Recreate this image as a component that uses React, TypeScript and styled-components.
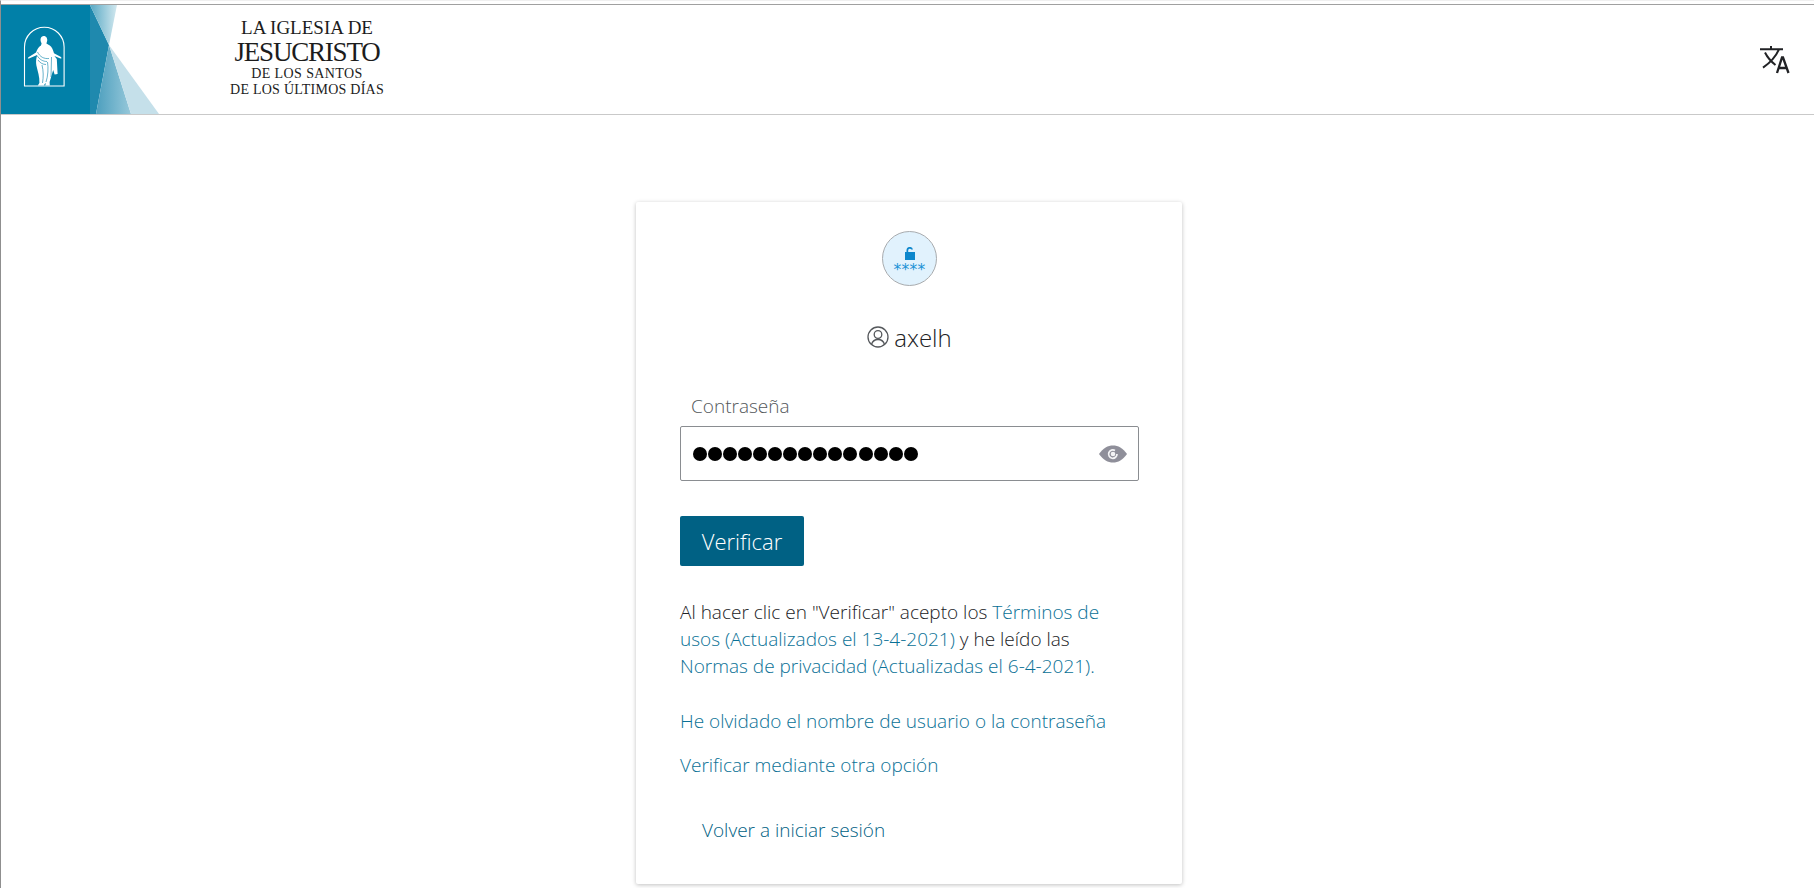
import styled, {createGlobalStyle} from 'styled-components';

const GlobalStyle = createGlobalStyle`
  html, body {
    margin: 0;
    height: 100%;
    overflow: hidden;
    background: #fff;
  }
  body {
    font-family: "Open Sans", "Noto Sans", sans-serif;
    color: #212225;
  }
`;

const Page = styled('div')`
  height: 888px;
  box-sizing: border-box;
  border-top: 1px solid #f0f0f0;
  border-left: 1px solid #8f8f8f;
  padding-top: 3px;
  overflow: hidden;
`;

const Header = styled('header')`
  display: flex;
  align-items: stretch;
  height: 111px;
  box-sizing: border-box;
  border-top: 1px solid #a0a0a0;
  border-bottom: 1px solid #c9c9c9;
`;

const Banner = styled('svg')`
  display: block;
  width: 160px;
  height: 109px;
  flex: none;
`;

const Wordmark = styled('div')`
  width: 152px;
  margin-left: 70px;
  padding-top: 13px;
  display: flex;
  flex-direction: column;
  align-items: center;
  font-family: "Liberation Serif", serif;
  color: #1c1c1c;
  text-transform: uppercase;
`;

const WordLine = styled('span')<{$size: number; $height: number; $track?: number}>`
  font-size: ${p => p.$size}px;
  line-height: ${p => p.$height}px;
  letter-spacing: ${p => p.$track ?? 0}px;
  white-space: nowrap;
`;

const LangButton = styled('button')`
  margin-left: auto;
  margin-right: 22px;
  margin-top: 38px;
  align-self: flex-start;
  width: 32px;
  height: 32px;
  padding: 0;
  border: 0;
  background: none;
  color: #212225;
`;

const Card = styled('main')`
  width: 546px;
  box-sizing: border-box;
  margin: 87px 0 0 635px;
  height: 682px;
  padding: 29px 43px 0 44px;
  border-radius: 2px;
  background: #fff;
  box-shadow: 0 1px 4px rgba(0, 0, 0, 0.25);
  display: flex;
  flex-direction: column;
`;

const Badge = styled('div')`
  align-self: center;
  width: 55px;
  height: 55px;
  box-sizing: border-box;
  padding-top: 15px;
  border: 1px solid #a8abae;
  border-radius: 50%;
  background: #e1f2fd;
  display: flex;
  flex-direction: column;
  align-items: center;
`;

const Stars = styled('span')`
  margin-top: 3px;
  font-family: "DejaVu Sans", sans-serif;
  font-size: 15.500px;
  line-height: 14px;
  letter-spacing: 0.3px;
  color: #1c93d6;
`;

const UserRow = styled('div')`
  display: flex;
  align-items: center;
  justify-content: center;
  gap: 5px;
  margin-top: 34px;
  height: 34px;
  font-size: 24px;
  font-weight: 300;
  color: #212225;
`;

const FieldLabel = styled('label')`
  display: block;
  margin: 40px 0 0 11px;
  font-size: 19px;
  line-height: 24px;
  font-weight: 300;
  color: #53575b;
`;

const PasswordBox = styled('div')`
  margin-top: 8px;
  height: 55px;
  box-sizing: border-box;
  border: 1px solid #8a8d91;
  border-radius: 2px;
  display: flex;
  align-items: center;
  padding: 0 11px 0 12px;
`;

const Dots = styled('div')`
  display: flex;
  gap: 1.05px;
  flex: 1;
`;

const Dot = styled('i')`
  display: block;
  width: 14px;
  height: 14px;
  border-radius: 50%;
  background: #000;
`;

const VerifyButton = styled('button')`
  align-self: flex-start;
  margin-top: 35px;
  width: 124px;
  height: 50px;
  border: 0;
  border-radius: 2px;
  background: #006184;
  color: #fff;
  font-family: inherit;
  font-size: 22px;
  font-weight: 300;
`;

const Legal = styled('p')`
  margin: 33px 0 0;
  font-size: 19px;
  line-height: 27px;
  font-weight: 300;
  color: #212225;
`;

const TextLink = styled('a')`
  color: #0a7196;
  text-decoration: none;
`;

const BlockLink = styled(TextLink)<{$top: number; $indent?: number}>`
  display: block;
  margin-top: ${p => p.$top}px;
  margin-left: ${p => p.$indent ?? 0}px;
  font-size: 19px;
  line-height: 27px;
  font-weight: 300;
`;

const BackLink = styled(BlockLink)`
  color: #006184;
`;

const App = () => (
  <>
    <GlobalStyle />
    <Page>
      <Header>
        <Banner viewBox="0 0 160 109" aria-hidden="true">
          <defs>
            <linearGradient id="veilTop" x1="0" y1="0" x2="1" y2="0">
              <stop offset="0" stopColor="#57a8c4" />
              <stop offset="1" stopColor="#d2e8ef" />
            </linearGradient>
            <linearGradient id="veilLow" x1="0" y1="0" x2="1" y2="0">
              <stop offset="0" stopColor="#4c9fbe" />
              <stop offset="1" stopColor="#97c8da" />
            </linearGradient>
          </defs>
          <rect width="160" height="109" fill="#fff" />
          <rect width="89" height="109" fill="#0180a8" />
          <polygon points="89,0 108,40 95,109 89,109" fill="#1f89ae" />
          <polygon points="89,0 116,0 108,40" fill="url(#veilTop)" />
          <polygon points="95,109 108,40 130,109" fill="url(#veilLow)" />
          <polygon points="108,40 158,109 130,109" fill="#c5e0ea" />
          <path fill="none" stroke="#fff" strokeWidth="1.1" d="M23.500 81V42a19.800 19.800 0 0 1 39.600 0v39z" />
          <path
            fill="#fff"
            d="M42.600 31C45.300 31 46.600 33.200 46.200 35.800L45.400 38.600L48.800 40.600C50.800 41.800 52 44.800 53 48.200L60 52L60.600 53.200L59.400 53.400L53.400 51L55.800 54L56.600 69L53.600 69.600L52.200 65L50.400 71L48.600 77L48.800 80.500L44.400 80.500L44.600 77.800L42.800 80.500L36.800 80.500L38.400 78C38.800 72 36.600 66 35.400 60.500C34.800 57 35 53.500 36.200 50L28 53.600L26.800 53.400L27.400 52.200L35 47.600C36.400 44 38 41.800 40 40.600L40.600 38.600L39.600 36C39.200 33.200 40.200 31 42.600 31Z"
          />
          <path
            fill="none"
            stroke="#0180a8"
            strokeWidth=".6"
            d="M36.500 47c2.500 5 6.500 7 11.500 6.500M36 50.500c2.500 4 6 6 10 6M37 55c2 3 5 4.500 8 4.500M41 60c1.500 6 1.500 12 .5 18M46.500 57c1 6 .5 14-1.500 20M50.500 52l-.5 20"
          />
        </Banner>
        <Wordmark>
          <WordLine $size={19} $height={20}>La Iglesia de</WordLine>
          <WordLine $size={27} $height={28} $track={-1.2}>Jesucristo</WordLine>
          <WordLine $size={14} $height={16} $track={0.4}>de los Santos</WordLine>
          <WordLine $size={14} $height={16} $track={0.25}>de los Últimos Días</WordLine>
        </Wordmark>
        <LangButton aria-label="Idioma">
          <svg width="32" height="32" viewBox="0 0 32 32" fill="none" stroke="currentColor">
            <path strokeWidth="2" d="M0 6.300h23M11 3v3.300M19 6.300C16 13 11 19 3 24.600M5 9.500c2.500 5 6 9 10.500 12.500" />
            <path strokeWidth="2.300" d="M17 30l5-15.500h1L28.500 30M18.500 25h8.500" />
          </svg>
        </LangButton>
      </Header>
      <Card>
        <Badge>
          <svg width="12" height="13" viewBox="0 0 12 13" fill="#0d87cc">
            <path d="M1 5h10v8H1zM2.500 5V3.200a3.300 3.200 0 0 1 6.500-.8H7.300a1.700 1.700 0 0 0-3.100.8V5z" />
          </svg>
          <Stars>****</Stars>
        </Badge>
        <UserRow>
          <svg width="22" height="22" viewBox="0 0 22 22" fill="none" stroke="#55585c" strokeWidth="1.300">
            <circle cx="11" cy="11" r="10" />
            <circle cx="11" cy="8.500" r="3.800" />
            <path d="M4.500 18.500c1-3.500 3.500-5 6.500-5s5.500 1.500 6.500 5" />
          </svg>
          axelh
        </UserRow>
        <FieldLabel>Contraseña</FieldLabel>
        <PasswordBox>
          <Dots>
            {Array.from({length: 15}, (_, i) => (
              <Dot key={i} />
            ))}
          </Dots>
          <svg width="28" height="18" viewBox="0 0 28 18">
            <path fill="#8f8f9a" d="M0 9C4 3 9 .5 14 .5S24 3 28 9c-4 6-9 8.500-14 8.500S4 15 0 9z" />
            <path fill="none" stroke="#f4f4f6" strokeWidth="1.700" d="M16 5.500A4.200 4.200 0 1 0 18 9" />
            <circle cx="14" cy="9" r="2.300" fill="#f4f4f6" />
          </svg>
        </PasswordBox>
        <VerifyButton>Verificar</VerifyButton>
        <Legal>
          Al hacer clic en "Verificar" acepto los <TextLink>Términos de usos (Actualizados el 13-4-2021)</TextLink> y he
          leído las <TextLink>Normas de privacidad (Actualizadas el 6-4-2021).</TextLink>
        </Legal>
        <BlockLink $top={27.5}>He olvidado el nombre de usuario o la contraseña</BlockLink>
        <BlockLink $top={17}>Verificar mediante otra opción</BlockLink>
        <BackLink $top={38} $indent={22}>Volver a iniciar sesión</BackLink>
      </Card>
    </Page>
  </>
);

export default App;
